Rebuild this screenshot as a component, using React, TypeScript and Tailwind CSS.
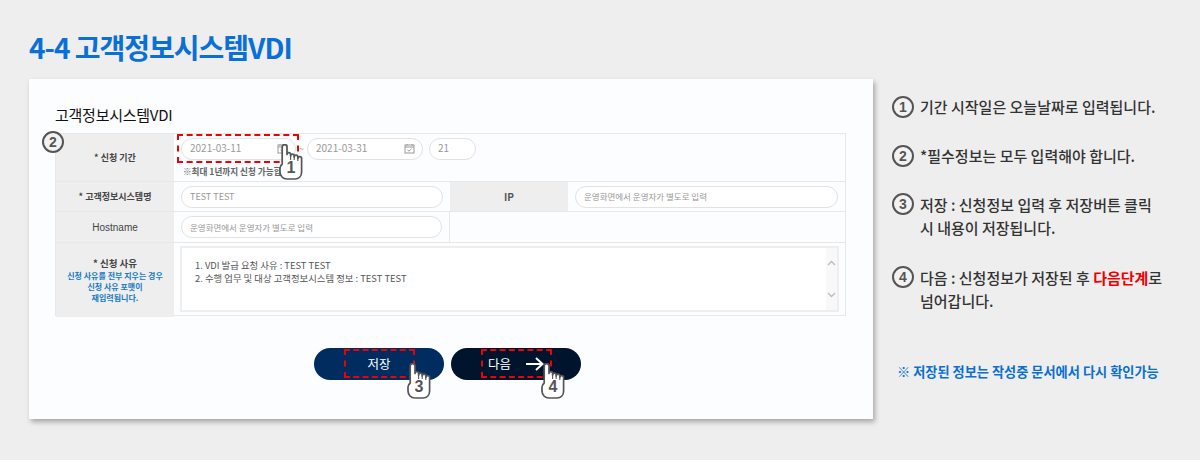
const font = "font-['Noto_Sans_CJK_KR','Noto_Sans',sans-serif]";

function Hand({ num, className }: { num: string; className: string }) {
  return (
    <div className={`absolute h-[36px] w-[24px] ${className}`}>
      <svg width="24" height="36" viewBox="0 0 24 36" className="absolute inset-0">
        <path
          d="M3.2 3A2.4 2.4 0 0 1 8 3V10.5A1.8 1.8 0 0 1 11.6 10.5V12A1.8 1.8 0 0 1 15.2 12V13A1.8 1.8 0 0 1 18.8 13V14.5A1.9 1.9 0 0 1 22.6 14.5V28C22.6 32 20 35 16 35H8C4 35 1 32 1 28V24C1 22 2 21 3.2 20Z"
          fill="#fff"
          stroke="#555"
          strokeWidth="1.7"
          strokeLinejoin="round"
        />
        <path d="M11.6 11V16M15.2 12V16M18.8 13V17" stroke="#555" strokeWidth="1.1" />
      </svg>
      <span className="absolute inset-x-0 bottom-[3px] text-center text-[16px] leading-[18px] font-bold text-[#555] font-['Liberation_Sans',sans-serif]">
        {num}
      </span>
    </div>
  );
}

function Num({ n, className = "" }: { n: string; className?: string }) {
  return (
    <span className={`flex h-[22px] w-[22px] shrink-0 items-center justify-center rounded-full border-2 border-[#555] bg-[#f2f2f2] text-[14px] leading-none font-bold text-[#555] font-['Liberation_Sans',sans-serif] ${className}`}>
      {n}
    </span>
  );
}

function CalendarIcon() {
  return (
    <svg width="11" height="11" viewBox="0 0 11 11" fill="none" stroke="#999" strokeWidth="1">
      <rect x="1" y="2" width="9" height="8" />
      <path d="M1 4H10M3 1V2.5M8 1V2.5M3.5 7L5 8.2L7.5 5.8" />
    </svg>
  );
}

function Pill({ children, className = "" }: { children?: React.ReactNode; className?: string }) {
  return (
    <div className={`flex h-[22px] items-center justify-between rounded-full border border-[#e2e2e2] bg-white pr-[7px] pl-[8px] text-[#999] ${className}`}>
      {children}
    </div>
  );
}

function Label({ children, className = "" }: { children: React.ReactNode; className?: string }) {
  return (
    <div className={`flex flex-col items-center justify-center bg-[#eeeeee] font-bold ${className}`}>
      {children}
    </div>
  );
}

const cellLine = "border-b border-[#e8e8e8]";
const notes = "운영화면에서 운영자가 별도로 입력";

export default function App() {
  return (
    <div className={`h-[460px] w-[1200px] overflow-hidden bg-[#eeeeee] pt-[29px] pl-[29px] ${font}`}>
      <h1 className="h-[50px] text-[28px] leading-[36px] font-bold tracking-[-1px] text-[#0a70d6]">
        4-4 고객정보시스템VDI
      </h1>
      <div className="flex">
        <div className="relative h-[340px] w-[844px] bg-[#fcfdff] px-[26px] pt-[26px] shadow-[2px_3px_5px_rgba(0,0,0,0.3)]">
          <h2 className="h-[28px] text-[15px] leading-[20px] font-normal tracking-[-0.25px] text-[#111]">
            고객정보시스템VDI
          </h2>

          <div className="grid h-[183px] w-[791px] grid-cols-[118px_276px_118px_277px] grid-rows-[48px_30px_31px_74px] border border-[#e8e8e8]">
            <Label className={`text-[9px] text-[#444] ${cellLine}`}>* 신청 기간</Label>
            <div className={`col-span-3 pt-[4px] pl-[7px] ${cellLine}`}>
              <div className="flex items-center text-[10px] leading-[18px]">
                <Pill className="w-[115px] pb-[2px]">
                  2021-03-11
                  <CalendarIcon />
                </Pill>
                <span className="w-[11px] text-center text-[8px] text-[#999]">~</span>
                <Pill className="w-[116px] pb-[2px]">
                  2021-03-31
                  <CalendarIcon />
                </Pill>
                <Pill className="ml-[6px] w-[47px] pb-[2px]">21</Pill>
              </div>
              <p className="mt-[5px] pl-[2px] text-[8.6px] leading-[12px] font-bold text-[#666]">
                ※최대 1년까지 신청 가능합
              </p>
            </div>

            <Label className={`text-[9px] text-[#444] ${cellLine}`}>* 고객정보시스템명</Label>
            <div className={`flex items-center px-[7px] text-[9px] ${cellLine}`}>
              <Pill className="w-full">TEST TEST</Pill>
            </div>
            <Label className={`text-[10px] text-[#555] ${cellLine}`}>IP</Label>
            <div className={`flex items-center px-[7px] text-[8.5px] ${cellLine}`}>
              <Pill className="w-full">{notes}</Pill>
            </div>

            <Label className={`text-[10px] text-[#444] ${cellLine}`}>
              <span className="font-normal font-['Liberation_Sans',sans-serif]">Hostname</span>
            </Label>
            <div className={`flex items-center border-r border-[#e8e8e8] px-[7px] text-[8.5px] ${cellLine}`}>
              <Pill className="w-full">{notes}</Pill>
            </div>
            <div className={`col-span-2 ${cellLine}`} />

            <Label className="leading-[11px] text-[#444]">
              <span className="text-[9.5px] leading-[13px]">* 신청 사유</span>
              <span className="text-[8px] text-[#1878c0]">신청 사유를 전부 지우는 경우</span>
              <span className="text-[8px] text-[#1878c0]">신청 사유 포맷이</span>
              <span className="text-[8px] text-[#1878c0]">재입력됩니다.</span>
            </Label>
            <div className="col-span-3 py-[3px] pr-[6px] pl-[6px]">
              <div className="flex h-[66px] border-2 border-[#eeeeee] bg-white">
                <div className="flex-1 pt-[11px] pl-[13px] text-[9.4px] leading-[12.5px] text-[#555]">
                  <p>1. VDI 발급 요청 사유 : TEST TEST</p>
                  <p>2. 수행 업무 및 대상 고객정보시스템 정보 : TEST TEST</p>
                </div>
                <div className="flex w-[11px] flex-col items-center justify-between bg-[#f8f8f8] py-[12px]">
                  <svg width="9" height="6" viewBox="0 0 9 6" fill="none" stroke="#bbb" strokeWidth="1.3">
                    <path d="M1 5L4.5 1.5L8 5" />
                  </svg>
                  <svg width="9" height="6" viewBox="0 0 9 6" fill="none" stroke="#bbb" strokeWidth="1.3">
                    <path d="M1 1L4.5 4.5L8 1" />
                  </svg>
                </div>
              </div>
            </div>
          </div>

          <div className="mt-[32px] flex justify-center gap-[7px] pr-[7px]">
            <button className="h-[32px] w-[130px] rounded-full bg-[#012c5f] text-[12.5px] text-white">
              저장
            </button>
            <button className="flex h-[32px] w-[130px] items-center rounded-full bg-[#00142d] pl-[37px] text-[12.5px] text-white">
              다음
              <svg width="18" height="14" viewBox="0 0 18 14" fill="none" stroke="#fff" strokeWidth="2" className="ml-[15px]">
                <path d="M0 7H16M10 1L16.5 7L10 13" />
              </svg>
            </button>
          </div>

          <div className="absolute top-[55px] left-[148px] h-[29px] w-[122px] border-2 border-dashed border-[#f00000]" />
          <div className="absolute top-[270px] left-[315px] h-[29px] w-[71px] border-2 border-dashed border-[#f00000]" />
          <div className="absolute top-[270px] left-[452px] h-[29px] w-[71px] border-2 border-dashed border-[#f00000]" />
          <Num n="2" className="absolute top-[52px] left-[13px]" />
          <Hand num="1" className="top-[65px] left-[250px]" />
          <Hand num="3" className="top-[284px] left-[378px]" />
          <Hand num="4" className="top-[284px] left-[512px]" />
        </div>

        <div className="ml-[19px] w-[290px] pt-[17px] text-[15px] font-medium text-[#333]">
          <div className="flex items-center gap-[6px] leading-[22px]">
            <Num n="1" />
            <p>기간 시작일은 오늘날짜로 입력됩니다.</p>
          </div>
          <div className="mt-[27px] flex items-center gap-[6px] leading-[22px]">
            <Num n="2" />
            <p>*필수정보는 모두 입력해야 합니다.</p>
          </div>
          <div className="mt-[26px] flex gap-[6px] leading-[23px]">
            <Num n="3" />
            <p>
              저장 : 신청정보 입력 후 저장버튼 클릭
              <br />
              시 내용이 저장됩니다.
            </p>
          </div>
          <div className="mt-[27px] flex gap-[6px] leading-[23px]">
            <Num n="4" />
            <p>
              다음 : 신청정보가 저장된 후 <b className="text-[#f00000]">다음단계</b>로
              <br />
              넘어갑니다.
            </p>
          </div>
          <p className="mt-[50px] pl-[5px] text-[13.2px] leading-[20px] font-bold text-[#0a6fd0]">
            ※ 저장된 정보는 작성중 문서에서 다시 확인가능
          </p>
        </div>
      </div>
    </div>
  );
}
